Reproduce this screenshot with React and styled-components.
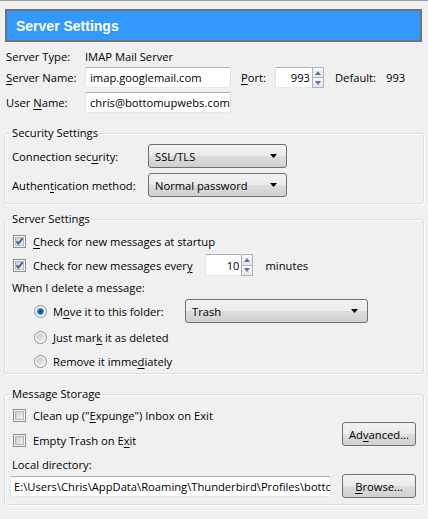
import styled, { createGlobalStyle } from "styled-components";

const GlobalStyle = createGlobalStyle`
    html, body {
        margin: 0;
        background: #f0f0f0;
    }
    body {
        font-family: "Open Sans", "Noto Sans", sans-serif;
        font-size: 11.2px;
        color: #000;
    }
    * {
        box-sizing: border-box;
    }
`;

const U = styled.span`
    text-decoration: underline;
    text-underline-offset: 2px;
`;

function CheckBox({ checked }) {
    return (
        <S_BoxIcon width="13" height="13" viewBox="0 0 13 13">
            <defs>
                <linearGradient id="cbg" x1="0" y1="0" x2="1" y2="1">
                    <stop offset="0" stopColor="#c6cbd1" />
                    <stop offset="1" stopColor="#f4f4f4" />
                </linearGradient>
            </defs>
            <rect x="0.5" y="0.5" width="12" height="12" fill="#f6f6f6" stroke="#8f8f8f" />
            <rect x="2.5" y="2.5" width="8" height="8" fill="url(#cbg)" stroke="#b3b7bc" />
            {checked && (
                <path
                    d="M3.4 6.4 L5.4 8.6 L9.6 3.4"
                    fill="none"
                    stroke="#3d5a8f"
                    strokeWidth="1.7"
                />
            )}
        </S_BoxIcon>
    );
}

function Radio({ checked }) {
    return (
        <S_BoxIcon width="13" height="13" viewBox="0 0 13 13">
            <defs>
                <linearGradient id="rbg" x1="0" y1="0" x2="1" y2="1">
                    <stop offset="0" stopColor="#c3c8ce" />
                    <stop offset="1" stopColor="#f2f2f2" />
                </linearGradient>
                <radialGradient id="rdot" cx="0.5" cy="0.5" r="0.5">
                    <stop offset="0" stopColor="#0d2f5e" />
                    <stop offset="0.55" stopColor="#1f5f9f" />
                    <stop offset="1" stopColor="#79c2f0" />
                </radialGradient>
            </defs>
            <circle cx="6.5" cy="6.5" r="6" fill="#f6f6f6" stroke="#8f8f8f" />
            <circle cx="6.5" cy="6.5" r="4.2" fill="url(#rbg)" />
            {checked && <circle cx="6.5" cy="6.5" r="3.6" fill="url(#rdot)" />}
        </S_BoxIcon>
    );
}

function Select({ value, width }) {
    return (
        <S_Select $w={width}>
            <span>{value}</span>
            <svg width="7" height="4" viewBox="0 0 7 4">
                <path d="M0 0 H7 L3.5 4 Z" fill="#000" />
            </svg>
        </S_Select>
    );
}

function Spin({ value, width, height }) {
    return (
        <S_Spin $h={height}>
            <S_SpinInput $w={width} readOnly value={value} />
            <S_SpinArrows>
                <S_SpinButton>
                    <svg width="6" height="4" viewBox="0 0 6 4">
                        <path d="M0 4 H6 L3 0 Z" fill="#5a73a3" />
                    </svg>
                </S_SpinButton>
                <S_SpinButton>
                    <svg width="6" height="4" viewBox="0 0 6 4">
                        <path d="M0 0 H6 L3 4 Z" fill="#5a73a3" />
                    </svg>
                </S_SpinButton>
            </S_SpinArrows>
        </S_Spin>
    );
}

function App() {
    return (
        <S_Page>
            <GlobalStyle />
            <S_Header>Server Settings</S_Header>

            <S_InfoRow $h={20} $mt={4}>
                <S_InfoLabel>Server Type:</S_InfoLabel>
                <span>IMAP Mail Server</span>
            </S_InfoRow>
            <S_InfoRow $h={21} $mt={1}>
                <S_InfoLabel>
                    <U>S</U>erver Name:
                </S_InfoLabel>
                <S_TextInput $w={146} readOnly value="imap.googlemail.com" />
                <S_PortLabel>
                    <U>P</U>ort:
                </S_PortLabel>
                <Spin value="993" width={37} height={21} />
                <S_DefaultLabel>Default:</S_DefaultLabel>
                <span>993</span>
            </S_InfoRow>
            <S_InfoRow $h={21} $mt={4}>
                <S_InfoLabel>
                    User <U>N</U>ame:
                </S_InfoLabel>
                <S_TextInput $w={146} readOnly value="chris@bottomupwebs.com" />
            </S_InfoRow>

            <S_Group $mt={12} $pb={6}>
                <S_Legend>Security Settings</S_Legend>
                <S_Row $h={24} $mt={3}>
                    <S_FieldLabel>
                        Connection sec<U>u</U>rity:
                    </S_FieldLabel>
                    <Select value="SSL/TLS" width={139} />
                </S_Row>
                <S_Row $h={24} $mt={5}>
                    <S_FieldLabel>
                        Authen<U>t</U>ication method:
                    </S_FieldLabel>
                    <Select value="Normal password" width={139} />
                </S_Row>
            </S_Group>

            <S_Group $mt={7} $pb={2}>
                <S_Legend>Server Settings</S_Legend>
                <S_Row $h={20} $mt={4}>
                    <S_Check>
                        <CheckBox checked />
                        <span>
                            <U>C</U>heck for new messages at startup
                        </span>
                    </S_Check>
                </S_Row>
                <S_Row $h={22} $mt={3}>
                    <S_Check>
                        <CheckBox checked />
                        <span>
                            Check for new messages ever<U>y</U>
                        </span>
                    </S_Check>
                    <S_SpinGap>
                        <Spin value="10" width={36} height={22} />
                    </S_SpinGap>
                    <S_Minutes>minutes</S_Minutes>
                </S_Row>
                <S_Row $h={20} $mt={1}>
                    When I delete a message:
                </S_Row>
                <S_Row $h={24} $mt={2}>
                    <S_RadioOption $w={151}>
                        <Radio checked />
                        <span>
                            M<U>o</U>ve it to this folder:
                        </span>
                    </S_RadioOption>
                    <Select value="Trash" width={183} />
                </S_Row>
                <S_Row $h={20} $mt={4}>
                    <S_RadioOption>
                        <Radio />
                        <span>
                            Just mar<U>k</U> it as deleted
                        </span>
                    </S_RadioOption>
                </S_Row>
                <S_Row $h={20} $mt={4}>
                    <S_RadioOption>
                        <Radio />
                        <span>
                            Remove it imme<U>d</U>iately
                        </span>
                    </S_RadioOption>
                </S_Row>
            </S_Group>

            <S_Group $mt={12} $pb={6}>
                <S_Legend>Message Storage</S_Legend>
                <S_Row $h={20} $mt={3}>
                    <S_Check>
                        <CheckBox />
                        <span>
                            Clean up ("<U>E</U>xpunge") Inbox on Exit
                        </span>
                    </S_Check>
                </S_Row>
                <S_Row $h={24} $mt={-3}>
                    <S_Check $shift={4}>
                        <CheckBox />
                        <span>
                            Empty Trash on E<U>x</U>it
                        </span>
                    </S_Check>
                    <S_Button>
                        Ad<U>v</U>anced...
                    </S_Button>
                </S_Row>
                <S_Row $h={20} $mt={8}>
                    Local directory:
                </S_Row>
                <S_Row $h={24} $mt={0}>
                    <S_DirInput
                        readOnly
                        value="E:\Users\Chris\AppData\Roaming\Thunderbird\Profiles\bottomupwebs.default\ImapMail\imap.googlemail.com"
                    />
                    <S_Button>
                        <U>B</U>rowse...
                    </S_Button>
                </S_Row>
            </S_Group>
        </S_Page>
    );
}

const BUTTON_FACE = `linear-gradient(#f2f2f2 0%, #ebebeb 48%, #dddddd 52%, #cfcfcf 100%)`;

const S_Page = styled.div`
    width: 428px;
    height: 519px;
    overflow: hidden;
    padding: 8px 4px 0 4px;
    border-top: 1px solid #9aa0a6;
`;

const S_Header = styled.div`
    align-items: center;
    background: #3399ff;
    border: 2px solid #737373;
    color: #fff;
    display: flex;
    font-family: "Liberation Sans", Arial, sans-serif;
    font-size: 14px;
    font-weight: bold;
    height: 33px;
    margin-left: 1px;
    padding-left: 9px;
    width: 417px;
`;

const S_InfoRow = styled.div`
    align-items: center;
    display: flex;
    height: ${(p) => p.$h}px;
    margin-top: ${(p) => p.$mt}px;
    padding-left: 2px;
`;

const S_InfoLabel = styled.span`
    flex-shrink: 0;
    width: 79px;
`;

const S_TextInput = styled.input`
    background: #fff;
    border: 1px solid;
    border-color: #abadb3 #dbdfe6 #e3e9ef #e2e3ea;
    border-radius: 2px;
    color: #000;
    font: inherit;
    height: 21px;
    outline: none;
    padding: 0 0 0 4px;
    width: ${(p) => p.$w}px;
`;

const S_PortLabel = styled.span`
    margin-left: 10px;
    width: 34px;
`;

const S_DefaultLabel = styled.span`
    margin-left: 11px;
    width: 51px;
`;

const S_Spin = styled.div`
    display: flex;
    height: ${(p) => p.$h}px;
`;

const S_SpinInput = styled(S_TextInput)`
    height: 100%;
    padding: 0 2px 0 0;
    text-align: right;
    border-right: none;
`;

const S_SpinArrows = styled.div`
    display: flex;
    flex-direction: column;
    width: 12px;
`;

const S_SpinButton = styled.div`
    align-items: center;
    background: linear-gradient(#fbfbfb, #e2e4e8);
    border: 1px solid #aeb4bd;
    display: flex;
    flex: 1;
    justify-content: center;
    & + & {
        border-top: none;
    }
`;

const S_Group = styled.fieldset`
    border: 1px solid #d5dfe5;
    border-radius: 3px;
    box-shadow: inset 1px 1px 0 #fff, 1px 1px 0 #fff;
    margin: ${(p) => p.$mt}px 0 0 0;
    min-width: 0;
    padding: 0 7px ${(p) => p.$pb}px 7px;
    width: 420px;
`;

const S_Legend = styled.legend`
    line-height: 16px;
    padding: 0;
`;

const S_Row = styled.div`
    align-items: center;
    display: flex;
    height: ${(p) => p.$h}px;
    margin-top: ${(p) => p.$mt}px;
`;

const S_FieldLabel = styled.span`
    flex-shrink: 0;
    width: 136px;
`;

const S_Select = styled.div`
    align-items: center;
    background: ${BUTTON_FACE};
    border: 1px solid #707070;
    border-radius: 3px;
    display: flex;
    height: 100%;
    justify-content: space-between;
    padding: 0 9px 0 6px;
    width: ${(p) => p.$w}px;
`;

const S_BoxIcon = styled.svg`
    display: block;
    flex-shrink: 0;
`;

const S_Check = styled.label`
    align-items: center;
    align-self: ${(p) => (p.$shift ? "flex-end" : "center")};
    display: flex;
    gap: 7px;
    height: 20px;
    margin-bottom: ${(p) => (p.$shift ? -p.$shift : 0)}px;
    margin-left: 1px;
`;

const S_SpinGap = styled.div`
    margin-left: 13px;
`;

const S_Minutes = styled.span`
    margin-left: 12px;
`;

const S_RadioOption = styled.label`
    align-items: center;
    display: flex;
    gap: 6px;
    margin-left: 22px;
    width: ${(p) => (p.$w ? `${p.$w}px` : "auto")};
`;

const S_Button = styled.div`
    align-items: center;
    background: ${BUTTON_FACE};
    border: 1px solid #707070;
    border-radius: 3px;
    display: flex;
    height: 24px;
    justify-content: center;
    margin-left: auto;
    width: 74px;
`;

const S_DirInput = styled(S_TextInput)`
    margin-left: -2px;
    padding-left: 3px;
    width: 321px;
`;

export default App;
